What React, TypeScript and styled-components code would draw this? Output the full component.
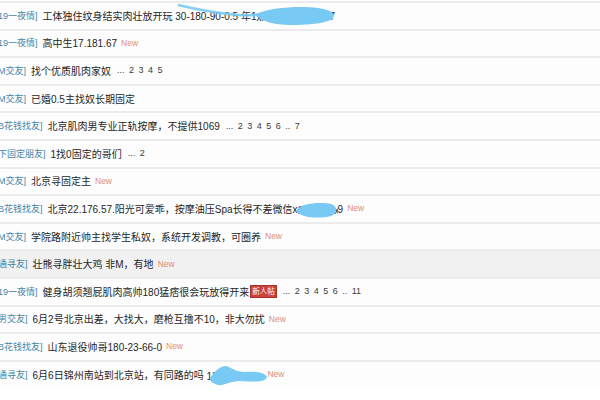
import React from "react";
import styled, { createGlobalStyle } from "styled-components";

const GlobalStyle = createGlobalStyle`
  html, body {
    margin: 0;
    padding: 0;
    background: #ffffff;
    overflow: hidden;
  }
`;

const Page = styled.div`
  position: relative;
  width: 600px;
  height: 400px;
  overflow: hidden;
  padding-top: 1px;
  box-sizing: border-box;
  font-family: "Liberation Sans", "Noto Sans CJK SC", sans-serif;
`;

const Row = styled.div<{ $shaded?: boolean }>`
  box-sizing: border-box;
  height: 27.6px;
  border-top: 2px solid #ebebeb;
  background: ${(p) => (p.$shaded ? "#f1f1f1" : "#fdfdfd")};
  display: flex;
  align-items: center;
  white-space: nowrap;
  margin-left: -2px;
  padding-bottom: 1px;
`;

const Tag = styled.span`
  font-size: 9px;
  color: #4585a8;
  margin-right: 5px;
`;

const Title = styled.span`
  font-size: 10px;
  color: #262626;
`;

const Hidden = styled.span<{ $w: number }>`
  display: inline-block;
  width: ${(p) => p.$w}px;
  overflow: hidden;
  vertical-align: bottom;
`;

const NewMark = styled.span`
  font-size: 8.5px;
  color: #dc8e78;
  margin-left: 4px;
`;

const Pages = styled.span`
  font-size: 9px;
  color: #3c3c3c;
  margin-left: 6px;
  word-spacing: 2px;
`;

const Badge = styled.span`
  font-size: 7.5px;
  color: #ffffff;
  background: #c9443c;
  border: 1px solid #a8302a;
  padding: 0 1px;
  margin-left: 1px;
  line-height: 11px;
`;

const Scribbles = styled.svg`
  position: absolute;
  left: 0;
  top: 0;
  pointer-events: none;
`;

type Item = {
  tag: string;
  title: string;
  hidden?: string;
  hiddenW?: number;
  tail?: string;
  isNew?: boolean;
  pages?: string;
  badge?: string;
  shaded?: boolean;
};

const items: Item[] = [
  { tag: "19一夜情]", title: "工体独住纹身结实肉壮放开玩 30-180-90-0.5 年1", hidden: "xxxxxxxxxxxxxxxx", hiddenW: 73, tail: "7" },
  { tag: "19一夜情]", title: "高中生17.181.67", isNew: true },
  { tag: "M交友]", title: "找个优质肌肉家奴", pages: "... 2  3  4  5" },
  { tag: "M交友]", title: "已婚0.5主找奴长期固定" },
  { tag: "B花钱找友]", title: "北京肌肉男专业正轨按摩，不提供1069", pages: "... 2  3  4  5  6 .. 7" },
  { tag: "下固定朋友]", title: "1找0固定的哥们", pages: "... 2" },
  { tag: "M交友]", title: "北京寻固定主", isNew: true },
  { tag: "B花钱找友]", title: "北京22.176.57.阳光可爱乖，按摩油压Spa长得不差微信x", hidden: "136xxxxxx", hiddenW: 40, tail: "9", isNew: true },
  { tag: "M交友]", title: "学院路附近帅主找学生私奴，系统开发调教，可圈养", isNew: true },
  { tag: "通寻友]", title: "壮熊寻胖壮大鸡 非M，有地", isNew: true, shaded: true },
  { tag: "19一夜情]", title: "健身胡须翘屁肌肉高帅180猛痞很会玩放得开来", badge: "新人帖", pages: "... 2  3  4  5  6 .. 11" },
  { tag: "男交友]", title: "6月2号北京出差，大找大，磨枪互撸不10，非大勿扰", isNew: true },
  { tag: "B花钱找友]", title: "山东退役帅哥180-23-66-0", isNew: true },
  { tag: "通寻友]", title: "6月6日锦州南站到北京站，有同路的吗 ", hidden: "13xxxxxxxxxx", hiddenW: 57, isNew: true },
];

const BLUE = "#78c9f4";

export default function App() {
  return (
    <Page>
      <GlobalStyle />
      {items.map((it, i) => (
        <Row key={i} $shaded={it.shaded}>
          <Tag>{it.tag}</Tag>
          <Title>
            {it.title}
            {it.hidden && <Hidden $w={it.hiddenW ?? 40}>{it.hidden}</Hidden>}
            {it.tail}
          </Title>
          {it.badge && <Badge>{it.badge}</Badge>}
          {it.pages && <Pages>{it.pages}</Pages>}
          {it.isNew && <NewMark>New</NewMark>}
        </Row>
      ))}
      <Scribbles width="600" height="400" viewBox="0 0 600 400">
        <path
          d="M178,5 C195,9 215,13 238,15 C250,16 258,15 266,13"
          stroke={BLUE}
          strokeWidth="2.5"
          fill="none"
          opacity="0.9"
        />
        <path
          d="M256,14 C272,7 300,6 318,8 C331,10 336,13 333,18 C329,23 310,25 290,25 C274,25 262,21 256,16 Z"
          fill={BLUE}
        />
        <path
          d="M296,211 C300,203 320,202 331,204 C338,206 338,214 331,216 C320,219 300,218 296,211 Z"
          fill={BLUE}
        />
        <path
          d="M210,378 C214,372 220,366 226,366 C232,368 236,372 245,372 C255,371 265,372 267,377 C266,382 255,382 240,381 C230,381 224,386 218,385 C212,383 209,381 210,378 Z"
          fill={BLUE}
        />
      </Scribbles>
    </Page>
  );
}
